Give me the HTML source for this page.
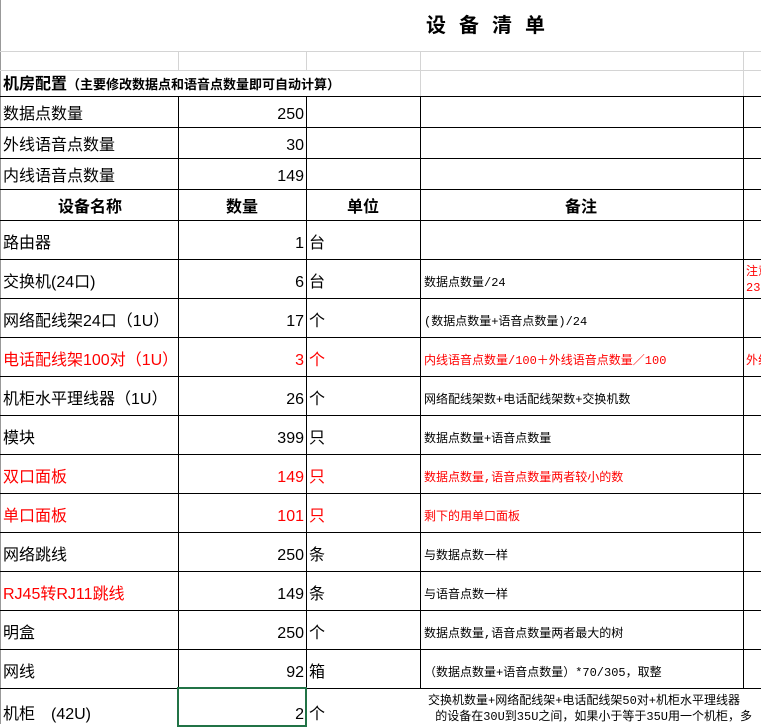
<!DOCTYPE html><html><head><meta charset="utf-8"><style>
body{margin:0;width:761px;height:724px;overflow:hidden;background:#fff;font-family:"Liberation Sans","Noto Sans CJK SC",sans-serif;position:relative}
.h{position:absolute;height:0;border-top:1px solid #000}
.v{position:absolute;width:0;border-left:1px solid #000}
.t{position:absolute;white-space:nowrap;font-size:16px;line-height:20px;margin-top:3px}
.s{font-size:12px;font-family:"Liberation Mono","Noto Sans CJK SC",monospace}
.r{color:#f00}
.b{font-weight:bold}
</style></head><body>
<div class="v" style="left:0;top:0;height:724px;border-color:#999"></div>
<div class="h" style="left:0;top:51px;width:761px;border-color:#d4d4d4"></div>
<div class="h" style="left:0;top:70px;width:761px;border-color:#d4d4d4"></div>
<div class="v" style="left:178px;top:51px;height:19px;border-color:#d4d4d4"></div>
<div class="v" style="left:306px;top:51px;height:19px;border-color:#d4d4d4"></div>
<div class="v" style="left:420px;top:51px;height:45px;border-color:#d4d4d4"></div>
<div class="v" style="left:743px;top:51px;height:45px;border-color:#d4d4d4"></div>
<div class="t b" style="left:426px;top:13px;font-size:20px;letter-spacing:13px">设备清单</div>
<div class="t b" style="left:3px;top:72px;font-size:16px">机房配置<span style="font-size:13px">（主要修改数据点和语音点数量即可自动计算）</span></div>
<div class="h" style="left:0;top:96px;width:761px"></div>
<div class="h" style="left:0;top:127px;width:761px"></div>
<div class="h" style="left:0;top:158px;width:761px"></div>
<div class="h" style="left:0;top:189px;width:761px"></div>
<div class="h" style="left:0;top:220px;width:761px"></div>
<div class="h" style="left:0;top:259px;width:761px"></div>
<div class="h" style="left:0;top:298px;width:761px"></div>
<div class="h" style="left:0;top:337px;width:761px"></div>
<div class="h" style="left:0;top:376px;width:761px"></div>
<div class="h" style="left:0;top:415px;width:761px"></div>
<div class="h" style="left:0;top:454px;width:761px"></div>
<div class="h" style="left:0;top:493px;width:761px"></div>
<div class="h" style="left:0;top:532px;width:761px"></div>
<div class="h" style="left:0;top:571px;width:761px"></div>
<div class="h" style="left:0;top:610px;width:761px"></div>
<div class="h" style="left:0;top:649px;width:761px"></div>
<div class="h" style="left:0;top:688px;width:761px"></div>
<div class="v" style="left:178px;top:96px;height:628px"></div>
<div class="v" style="left:306px;top:96px;height:628px"></div>
<div class="v" style="left:420px;top:96px;height:592px"></div>
<div class="v" style="left:743px;top:96px;height:592px"></div>
<div style="position:absolute;left:177px;top:687px;width:130px;height:40px;border:2px solid #217346;box-sizing:border-box"></div>

<div class="t" style="left:3px;top:102px">数据点数量</div><div class="t" style="right:457px;top:102px">250</div>
<div class="t" style="left:3px;top:133px">外线语音点数量</div><div class="t" style="right:457px;top:133px">30</div>
<div class="t" style="left:3px;top:164px">内线语音点数量</div><div class="t" style="right:457px;top:164px">149</div>
<div class="t b" style="left:58px;top:195px">设备名称</div>
<div class="t b" style="left:226px;top:195px">数量</div>
<div class="t b" style="left:347px;top:195px">单位</div>
<div class="t b" style="left:565px;top:195px">备注</div>

<div class="t" style="left:3px;top:231px">路由器</div><div class="t" style="right:457px;top:231px">1</div><div class="t" style="left:309px;top:231px">台</div>
<div class="t" style="left:3px;top:270px">交换机(24口)</div><div class="t" style="right:457px;top:270px">6</div><div class="t" style="left:309px;top:270px">台</div><div class="t s" style="left:424px;top:270px">数据点数量/24</div>
<div class="t s r" style="left:746px;top:261px;line-height:16px">注意<br>23</div>
<div class="t" style="left:3px;top:309px">网络配线架24口（1U）</div><div class="t" style="right:457px;top:309px">17</div><div class="t" style="left:309px;top:309px">个</div><div class="t s" style="left:424px;top:309px">(数据点数量+语音点数量)/24</div>
<div class="t r" style="left:3px;top:348px">电话配线架100对（1U）</div><div class="t r" style="right:457px;top:348px">3</div><div class="t r" style="left:309px;top:348px">个</div><div class="t s r" style="left:424px;top:348px">内线语音点数量/100＋外线语音点数量／100</div><div class="t s r" style="left:746px;top:348px">外线</div>
<div class="t" style="left:3px;top:387px">机柜水平理线器（1U）</div><div class="t" style="right:457px;top:387px">26</div><div class="t" style="left:309px;top:387px">个</div><div class="t s" style="left:424px;top:387px">网络配线架数+电话配线架数+交换机数</div>
<div class="t" style="left:3px;top:426px">模块</div><div class="t" style="right:457px;top:426px">399</div><div class="t" style="left:309px;top:426px">只</div><div class="t s" style="left:424px;top:426px">数据点数量+语音点数量</div>
<div class="t r" style="left:3px;top:465px">双口面板</div><div class="t r" style="right:457px;top:465px">149</div><div class="t r" style="left:309px;top:465px">只</div><div class="t s r" style="left:424px;top:465px">数据点数量,语音点数量两者较小的数</div>
<div class="t r" style="left:3px;top:504px">单口面板</div><div class="t r" style="right:457px;top:504px">101</div><div class="t r" style="left:309px;top:504px">只</div><div class="t s r" style="left:424px;top:504px">剩下的用单口面板</div>
<div class="t" style="left:3px;top:543px">网络跳线</div><div class="t" style="right:457px;top:543px">250</div><div class="t" style="left:309px;top:543px">条</div><div class="t s" style="left:424px;top:543px">与数据点数一样</div>
<div class="t r" style="left:3px;top:582px">RJ45转RJ11跳线</div><div class="t" style="right:457px;top:582px">149</div><div class="t" style="left:309px;top:582px">条</div><div class="t s" style="left:424px;top:582px">与语音点数一样</div>
<div class="t" style="left:3px;top:621px">明盒</div><div class="t" style="right:457px;top:621px">250</div><div class="t" style="left:309px;top:621px">个</div><div class="t s" style="left:424px;top:621px">数据点数量,语音点数量两者最大的树</div>
<div class="t" style="left:3px;top:660px">网线</div><div class="t" style="right:457px;top:660px">92</div><div class="t" style="left:309px;top:660px">箱</div><div class="t s" style="left:424px;top:660px">（数据点数量+语音点数量）*70/305，取整</div>
<div class="t" style="left:3px;top:702px">机柜　(42U)</div><div class="t" style="right:457px;top:702px">2</div><div class="t" style="left:309px;top:702px">个</div>
<div class="t s" style="left:428px;top:690px;line-height:16px">交换机数量+网络配线架+电话配线架50对+机柜水平理线器<br>&nbsp;的设备在30U到35U之间，如果小于等于35U用一个机柜，多</div>
</body></html>
